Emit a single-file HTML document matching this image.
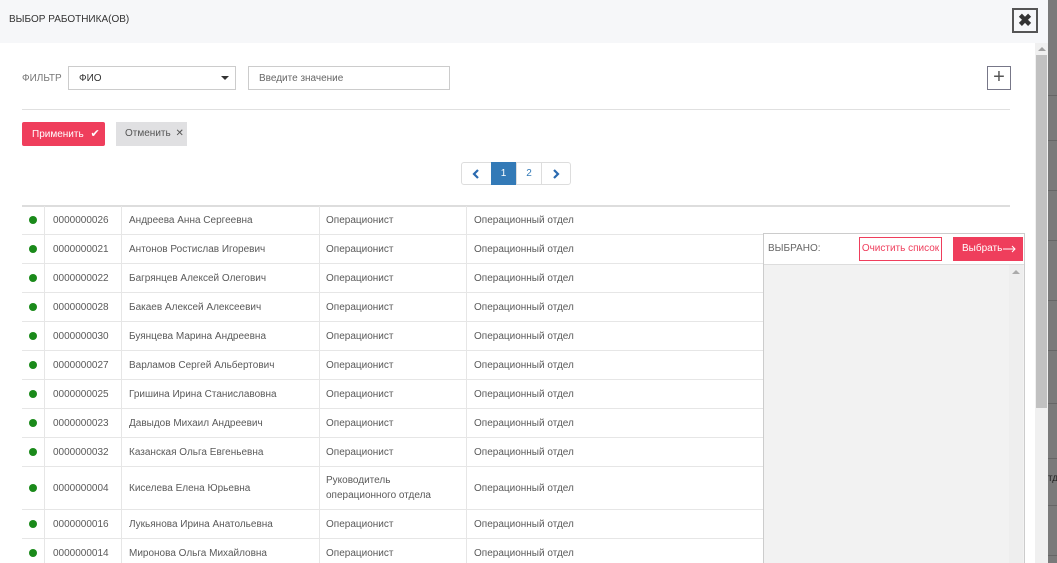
<!DOCTYPE html>
<html><head><meta charset="utf-8"><style>
*{box-sizing:border-box;margin:0;padding:0}
body{width:1057px;height:563px;overflow:hidden;background:#7a7a7a;font-family:"Liberation Sans",sans-serif;font-size:10px;color:#5a5a5a;position:relative}
.abs{position:absolute}
.modal{position:absolute;left:0;top:0;width:1048px;height:563px;background:#fff;overflow:hidden}
.hdr{position:absolute;left:0;top:0;width:1048px;height:43px;background:#f6f7f9}
.row{position:absolute;left:22px;width:988px;height:29px;border-bottom:1px solid #e6e6e6}
.row div{position:absolute;top:0;height:100%;display:flex;align-items:center;border-right:1px solid #e6e6e6}
.c0{left:0;width:23px;justify-content:center}
.c1{left:23px;width:77px;padding-left:8px}
.c2{left:100px;width:198px;padding-left:7px}
.c3{left:298px;width:147px;padding-left:6px}
.c4{left:445px;width:300px;padding-left:7px;border-right:none!important}
.dot{width:8px;height:8px;border-radius:50%;background:#1a8a1a}
.rline{position:absolute;left:1048px;width:9px;height:1px;background:#666}
</style></head><body>
<div class="rline" style="top:95px"></div><div class="rline" style="top:140px"></div><div class="rline" style="top:190px"></div><div class="rline" style="top:240px"></div><div class="rline" style="top:300px"></div><div class="rline" style="top:350px"></div><div class="rline" style="top:403px"></div><div class="rline" style="top:458px"></div><div class="rline" style="top:505px"></div><div class="rline" style="top:555px"></div>
<div class="abs" style="left:1048px;top:473px;font-size:10px;color:#222">тд</div>
<div class="modal">
<div class="hdr"></div>
<div class="abs" style="left:9px;top:14px;font-size:10px;color:#333">ВЫБОР РАБОТНИКА(ОВ)</div>
<div class="abs" style="left:1012px;top:8px;width:26px;height:25px;border:2px solid #555;display:flex;align-items:center;justify-content:center;font-size:17px;font-weight:bold;color:#333;line-height:1">✖</div>
<div class="abs" style="left:1035px;top:43px;width:13px;height:520px;background:#f0f0f0"></div>
<div class="abs" style="left:1036px;top:55px;width:11px;height:353px;background:#c1c1c1"></div>
<div class="abs" style="left:1038px;top:47px;width:0;height:0;border-left:4px solid transparent;border-right:4px solid transparent;border-bottom:4px solid #a0a0a0"></div>

<div class="abs" style="left:22px;top:73px;color:#777">ФИЛЬТР</div>
<div class="abs" style="left:68px;top:66px;width:168px;height:24px;border:1px solid #ccc;padding-left:10px;line-height:23px;color:#333">ФИО</div>
<div class="abs" style="left:221px;top:76px;width:0;height:0;border-left:4px solid transparent;border-right:4px solid transparent;border-top:4px solid #333"></div>
<div class="abs" style="left:248px;top:66px;width:202px;height:24px;border:1px solid #ccc;padding-left:10px;line-height:23px;color:#666">Введите значение</div>
<div class="abs" style="left:987px;top:66px;width:24px;height:24px;border:1px solid #778;color:#555;font-size:20px;line-height:20px;text-align:center;font-weight:300">+</div>
<div class="abs" style="left:22px;top:109px;width:988px;height:1px;background:#e0e0e0"></div>

<div class="abs" style="left:22px;top:122px;width:83px;height:24px;background:#ef3e5c;border-radius:2px;color:#fff;line-height:24px;padding-left:10px">Применить <span style="font-size:11px;margin-left:4px">✔</span></div>
<div class="abs" style="left:116px;top:122px;width:71px;height:24px;background:#e0e0e2;color:#555;line-height:24px;padding-left:9px">Отменить <span style="margin-left:2px">✕</span></div>

<div class="abs" style="left:461px;top:162px;width:110px;height:23px;border:1px solid #ddd;border-radius:3px"></div>
<div class="abs" style="left:491px;top:162px;width:25px;height:23px;background:#337ab7;color:#fff;text-align:center;line-height:23px">1</div>
<div class="abs" style="left:516px;top:162px;width:26px;height:23px;border-left:1px solid #ddd;border-right:1px solid #ddd;color:#337ab7;text-align:center;line-height:23px">2</div>
<svg class="abs" style="left:472px;top:169px" width="8" height="10"><path d="M6 1 L2 5 L6 9" stroke="#2a6ab0" stroke-width="2.2" fill="none"/></svg>
<svg class="abs" style="left:552px;top:169px" width="8" height="10"><path d="M2 1 L6 5 L2 9" stroke="#2a6ab0" stroke-width="2.2" fill="none"/></svg>

<div class="abs" style="left:22px;top:205px;width:988px;height:2px;background:#ddd"></div>
<div class="row" style="top:206px"><div class="c0"><span class="dot"></span></div><div class="c1">0000000026</div><div class="c2">Андреева Анна Сергеевна</div><div class="c3">Операционист</div><div class="c4">Операционный отдел</div></div>
<div class="row" style="top:235px"><div class="c0"><span class="dot"></span></div><div class="c1">0000000021</div><div class="c2">Антонов Ростислав Игоревич</div><div class="c3">Операционист</div><div class="c4">Операционный отдел</div></div>
<div class="row" style="top:264px"><div class="c0"><span class="dot"></span></div><div class="c1">0000000022</div><div class="c2">Багрянцев Алексей Олегович</div><div class="c3">Операционист</div><div class="c4">Операционный отдел</div></div>
<div class="row" style="top:293px"><div class="c0"><span class="dot"></span></div><div class="c1">0000000028</div><div class="c2">Бакаев Алексей Алексеевич</div><div class="c3">Операционист</div><div class="c4">Операционный отдел</div></div>
<div class="row" style="top:322px"><div class="c0"><span class="dot"></span></div><div class="c1">0000000030</div><div class="c2">Буянцева Марина Андреевна</div><div class="c3">Операционист</div><div class="c4">Операционный отдел</div></div>
<div class="row" style="top:351px"><div class="c0"><span class="dot"></span></div><div class="c1">0000000027</div><div class="c2">Варламов Сергей Альбертович</div><div class="c3">Операционист</div><div class="c4">Операционный отдел</div></div>
<div class="row" style="top:380px"><div class="c0"><span class="dot"></span></div><div class="c1">0000000025</div><div class="c2">Гришина Ирина Станиславовна</div><div class="c3">Операционист</div><div class="c4">Операционный отдел</div></div>
<div class="row" style="top:409px"><div class="c0"><span class="dot"></span></div><div class="c1">0000000023</div><div class="c2">Давыдов Михаил Андреевич</div><div class="c3">Операционист</div><div class="c4">Операционный отдел</div></div>
<div class="row" style="top:438px"><div class="c0"><span class="dot"></span></div><div class="c1">0000000032</div><div class="c2">Казанская Ольга Евгеньевна</div><div class="c3">Операционист</div><div class="c4">Операционный отдел</div></div>
<div class="row" style="top:467px;height:43px"><div class="c0"><span class="dot"></span></div><div class="c1">0000000004</div><div class="c2">Киселева Елена Юрьевна</div><div class="c3" style="line-height:15px">Руководитель<br>операционного отдела</div><div class="c4">Операционный отдел</div></div>
<div class="row" style="top:510px"><div class="c0"><span class="dot"></span></div><div class="c1">0000000016</div><div class="c2">Лукьянова Ирина Анатольевна</div><div class="c3">Операционист</div><div class="c4">Операционный отдел</div></div>
<div class="row" style="top:539px"><div class="c0"><span class="dot"></span></div><div class="c1">0000000014</div><div class="c2">Миронова Ольга Михайловна</div><div class="c3">Операционист</div><div class="c4">Операционный отдел</div></div>

<div class="abs" style="left:763px;top:233px;width:262px;height:340px;border:1px solid #ccc;background:#fff"></div>
<div class="abs" style="left:768px;top:243px;color:#666">ВЫБРАНО:</div>
<div class="abs" style="left:859px;top:237px;width:83px;height:24px;border:1px solid #ef3e5c;color:#ef3e5c;text-align:center;line-height:22px">Очистить список</div>
<div class="abs" style="left:953px;top:237px;width:70px;height:24px;background:#ef3e5c;color:#fff;line-height:24px;padding-left:9px">Выбрать</div>
<svg class="abs" style="left:1003px;top:245px" width="14" height="8"><path d="M0 4 H12 M9 1 L12 4 L9 7" stroke="#fff" stroke-width="1" fill="none"/></svg>
<div class="abs" style="left:764px;top:264px;width:260px;height:300px;background:#f2f2f2;border-top:1px solid #ddd"></div>
<div class="abs" style="left:1009px;top:265px;width:14px;height:300px;background:#eeeeee"></div>
<div class="abs" style="left:1012px;top:270px;width:0;height:0;border-left:4px solid transparent;border-right:4px solid transparent;border-bottom:4px solid #aaa"></div>
</div>
</body></html>
